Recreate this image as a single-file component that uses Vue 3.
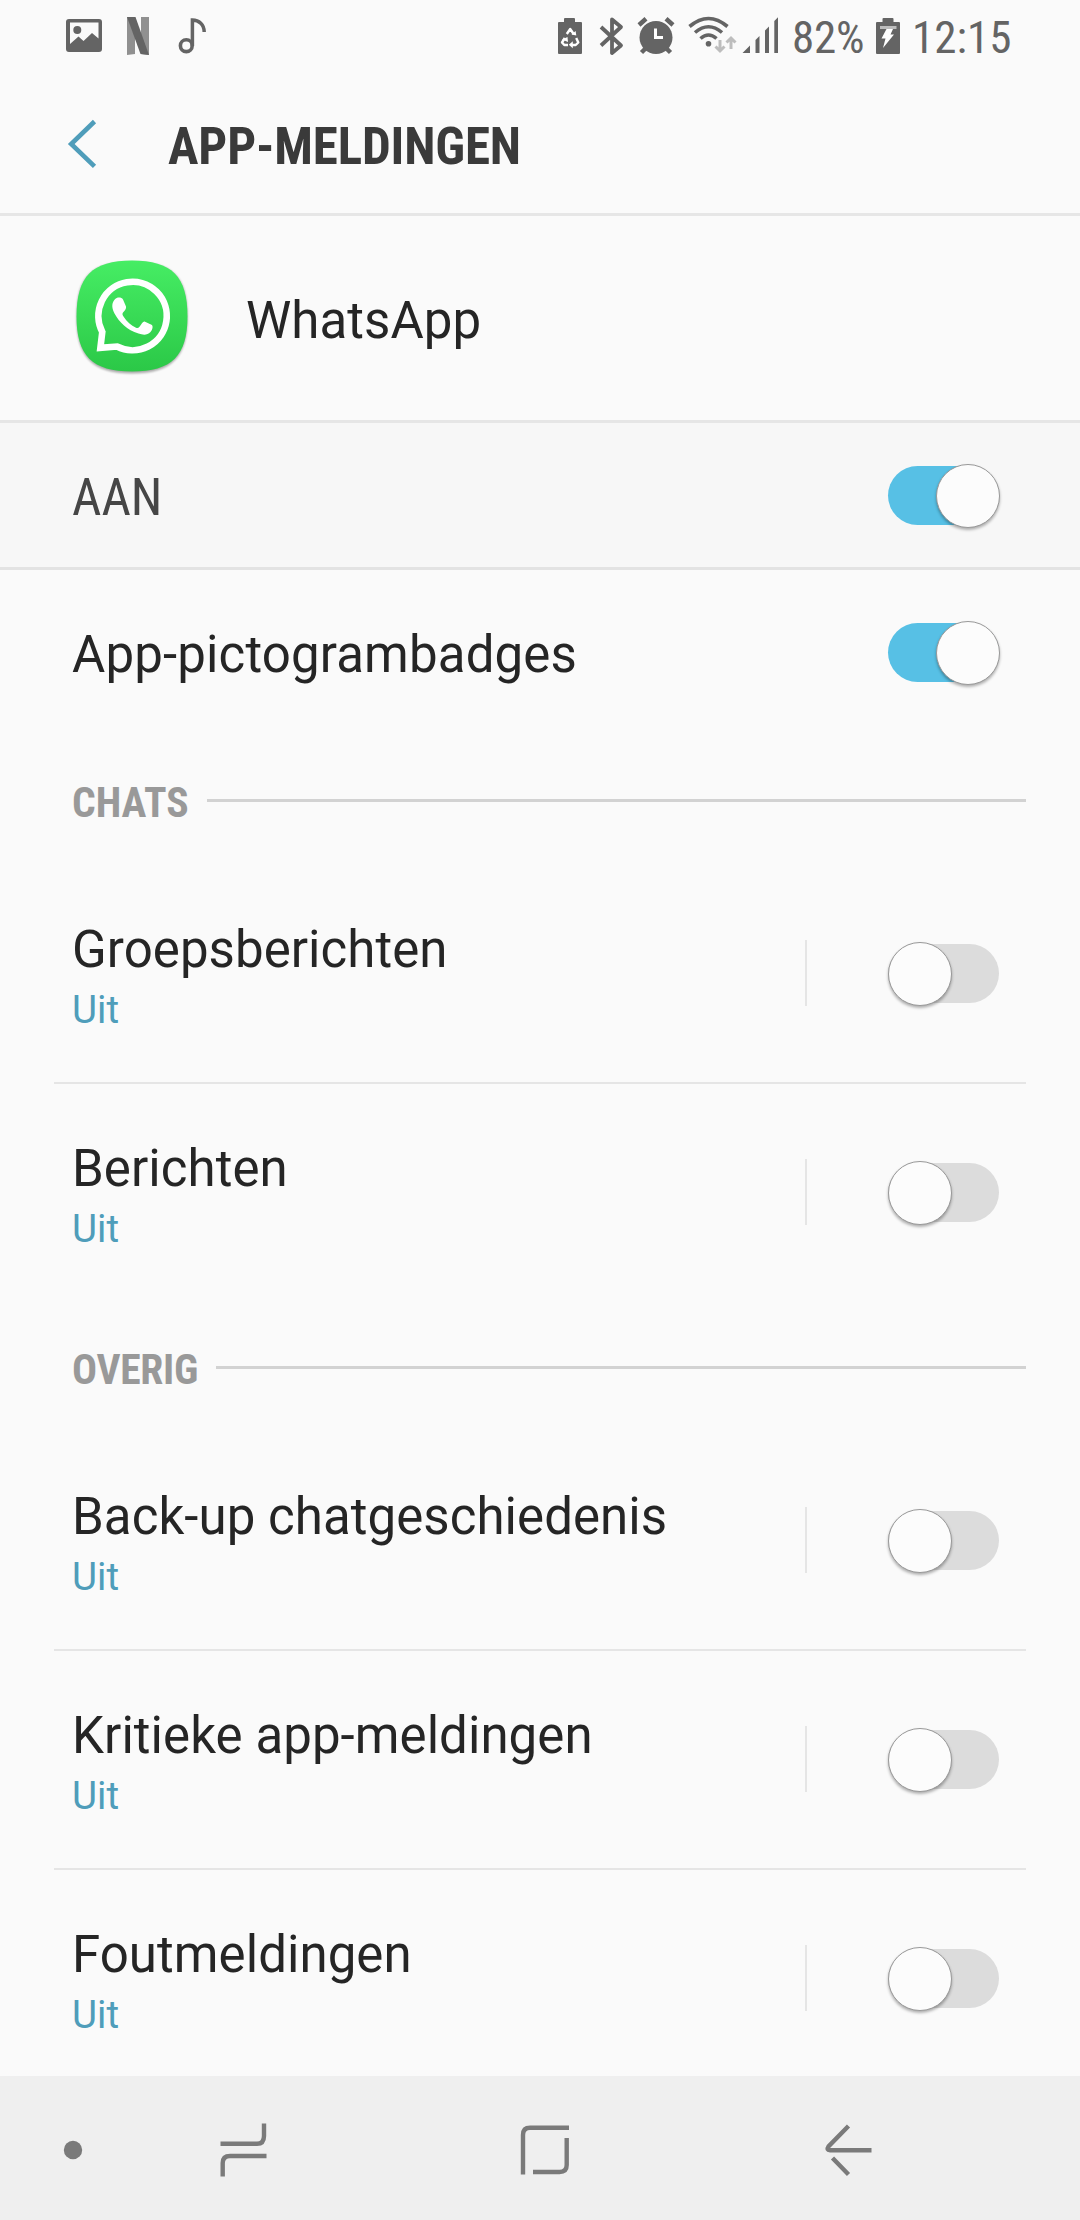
<script setup>
import { ref } from 'vue'

const enabled = ref(true)
const badges = ref(true)
const sections = ref([
  {
    title: 'CHATS',
    rows: [
      { name: 'Groepsberichten', on: false },
      { name: 'Berichten', on: false },
    ],
  },
  {
    title: 'OVERIG',
    rows: [
      { name: 'Back-up chatgeschiedenis', on: false },
      { name: 'Kritieke app-meldingen', on: false },
      { name: 'Foutmeldingen', on: false },
    ],
  },
])
</script>

<template>
  <div class="screen">
    <header class="status">
      <svg class="status-left" width="160" height="75" viewBox="0 0 160 75">
        <path fill="#646464" fill-rule="evenodd" d="M9 19H39Q42 19 42 22V49Q42 52 39 52H9Q6 52 6 49V22Q6 19 9 19ZM10 22.500V44L18.500 36.500L23.500 41L32 33L38.500 38.500V22.500Z" />
        <circle cx="17.300" cy="30" r="4" fill="#646464" />
        <path fill="#909090" d="M67 17H75V54L67 55ZM81 17H89V55L81 54Z" />
        <path fill="#646464" d="M67 17H75.500L89 55L80.500 54Z" />
        <circle cx="126.300" cy="45.700" r="5.900" fill="none" stroke="#646464" stroke-width="3.600" />
        <path fill="none" stroke="#646464" stroke-width="3.500" d="M132.400 46V20C139 20 144.200 24.500 144.200 32" />
      </svg>
      <div class="status-right">
        <svg width="240" height="75" viewBox="0 0 240 75">
          <path fill="#646464" d="M18 22H24V19Q24 18 25 18H34Q35 18 35 19V22H41Q42 22 42 23V53Q42 54 41 54H19Q18 54 18 53V23Q18 22 19 22Z" />
          <path fill="none" stroke="#fff" stroke-width="2.400" stroke-linejoin="round" d="M26.800 34L30.200 29L33.600 34M36.200 38L38.300 42.500L35.700 45H31.500M28 45H24.300L22 42.500L24.800 38" />
          <path fill="#fff" d="M31.500 34.600L36.300 35.500L35.600 31ZM32.800 41.200V48.200L28.800 44.700ZM22 39.500L27.500 37L28 42Z" />
          <path fill="none" stroke="#646464" stroke-width="3.800" stroke-linejoin="round" d="M61 27L81 45.500L72 53V19.500L81 27L61 45.500" />
          <circle cx="116" cy="37.500" r="16.500" fill="#646464" />
          <path fill="none" stroke="#646464" stroke-width="4.500" d="M99 25L106 18.800M133 25L126 18.800M106 48L101.500 52.500M126 48L130.500 52.500" />
          <path fill="none" stroke="#fff" stroke-width="3" d="M115.500 28.500V37.500H123" />
          <g fill="none" stroke="#646464" stroke-width="3.600">
            <path d="M149.500 26.500Q168.500 10.500 187.500 26.500" />
            <path d="M155 32.500Q168.500 21 182 32.500" />
            <path d="M160.500 38.500Q168.500 31.500 176.500 38.500" />
          </g>
          <circle cx="168.500" cy="43.800" r="2.800" fill="#646464" />
          <path fill="none" stroke="#bdbdbd" stroke-width="3" d="M180 40V51M175.500 46.500L180 51L184.500 46.500M191 49V38M186.500 42.500L191 38L195.500 42.500" />
          <path fill="#646464" d="M202.500 53L210 45.500V53ZM215.500 53V40L219.500 36V53ZM225 53V30.500L229 26.500V53ZM234.300 53V21L238 17.300V53Z" />
        </svg>
        <span class="cond percent">82%</span>
        <svg width="24" height="75" viewBox="0 0 24 75">
          <path fill="#646464" d="M0 23Q0 22 1 22H6.500V19Q6.500 18 7.500 18H16.500Q17.500 18 17.500 19V22H23Q24 22 24 23V53Q24 54 23 54H1Q0 54 0 53Z" />
          <path fill="#bdbdbd" d="M4 26H20.500V29H4Z" />
          <path fill="#fff" d="M10.500 29H17L14.500 34.500H18L7 48L9.500 38.500H5.500Z" />
        </svg>
        <span class="cond clock">12:15</span>
      </div>
    </header>

    <div class="titlebar">
      <svg width="30" height="50" viewBox="0 0 30 50">
        <path fill="none" stroke="#4f9dba" stroke-width="4.600" d="M27.500 2.500L4.200 25L27.500 47.300" />
      </svg>
      <h1 class="cond">APP-MELDINGEN</h1>
    </div>

    <div class="app">
      <svg width="116" height="124" viewBox="0 0 116 124">
        <defs>
          <linearGradient id="leaf" x1="0" y1="0" x2="0" y2="1">
            <stop offset="0" stop-color="#46ed64" />
            <stop offset="1" stop-color="#2bc847" />
          </linearGradient>
          <filter id="soft" x="-10%" y="-10%" width="120%" height="120%">
            <feGaussianBlur stdDeviation="1.300" />
          </filter>
        </defs>
        <path fill="#000" opacity=".32" filter="url(#soft)" d="M58 6C99 6 113.500 20 113.500 61.500C113.500 101 98 117.500 58 117.500C18 117.500 2.500 101 2.500 61.500C2.500 20 17 6 58 6Z" />
        <path fill="url(#leaf)" d="M58 4.500C98 4.500 113.500 20.500 113.500 60.500C113.500 99.500 98 115.500 58 115.500C18 115.500 2.500 99.500 2.500 60.500C2.500 20.500 18 4.500 58 4.500Z" />
        <path fill="none" stroke="#fff" stroke-width="6.600" d="M28.300 76A34.200 34.200 0 1 1 43 90.500L26.400 91.900Z" />
        <path fill="#fff" d="M41.500 42.800C43.500 41 47.500 41 49 43.500L52 50.500C52.500 52.500 51 54.500 49 56.500C48 58 48.500 59 49.500 60.500C53 66 57 69.500 62 71.800C63.500 72.500 64.500 72 65.500 70.800C68 67.500 69 65 71 65.700L77.500 68.800C79.500 70 78.500 74 76.500 76C73 79.500 69 79 64.500 77.500C53 74 45.500 66.500 40.500 57.500C37 51 38 46 41.500 42.800Z" />
      </svg>
      <span class="label">WhatsApp</span>
    </div>

    <div class="master">
      <span class="cond">AAN</span>
      <button class="switch" :class="{ on: enabled }" @click="enabled = !enabled"><i /></button>
    </div>

    <div class="badges">
      <span class="label">App-pictogrambadges</span>
      <button class="switch" :class="{ on: badges }" @click="badges = !badges"><i /></button>
    </div>

    <main>
      <section v-for="s in sections" :key="s.title">
        <div class="group"><h2 class="cond">{{ s.title }}</h2><hr /></div>
        <div v-for="r in s.rows" :key="r.name" class="row">
          <div class="text">
            <span class="label">{{ r.name }}</span>
            <span class="state">{{ r.on ? 'Aan' : 'Uit' }}</span>
          </div>
          <div class="divider" />
          <button class="switch" :class="{ on: r.on }" @click="r.on = !r.on"><i /></button>
        </div>
      </section>
    </main>

    <nav class="navbar">
      <svg width="1080" height="144" viewBox="0 0 1080 144">
        <circle cx="73" cy="74" r="9.200" fill="#7a7a7a" />
        <g fill="none" stroke="#7a7a7a" stroke-width="4.400">
          <path d="M220.500 67.800H257Q264 67.800 264 60V47.500M266.500 80H230Q222.700 80 222.700 87V100.500" />
          <path d="M523 98.500V59Q523 51.800 530 51.800H569M566.700 62V89Q566.700 96 559.500 96H533" />
          <path d="M848.500 50L828.500 70.500Q826 74.200 830 74.200H871.500M832.500 82L848.500 98.500" />
        </g>
      </svg>
    </nav>
  </div>
</template>

<style>
body { background: #fafafa; }
</style>

<style scoped>
.screen {
  width: 1080px;
  height: 2220px;
  overflow: hidden;
  display: flex;
  flex-direction: column;
  background: #fafafa;
  font-family: Roboto, sans-serif;
  color: #252525;
}
.screen > * { flex-shrink: 0; box-sizing: border-box; }
svg { display: block; flex: none; }
.cond { font-family: "Roboto Condensed", Roboto, sans-serif; font-stretch: 75%; white-space: nowrap; }
h1, h2, hr { margin: 0; border: 0; }

.status { height: 75px; display: flex; justify-content: space-between; padding: 0 69px 0 60px; color: #646464; }
.status-right { display: flex; font-size: 45px; line-height: 75px; }
.percent { width: 84px; margin-left: 12px; letter-spacing: -.2px; }
.clock { width: 99px; margin-left: 12px; }

.titlebar { height: 141px; display: flex; align-items: center; padding: 0 0 0 67px; border-bottom: 3px solid #e6e6e6; }
.titlebar h1 { margin-left: 71px; padding-top: 6px; font-size: 51px; font-weight: 700; letter-spacing: -.15px; color: #3a3a3a; line-height: 70px; }

.app { height: 207px; display: flex; padding: 40px 0 0 74px; border-bottom: 3px solid #e6e6e6; }
.label { font-size: 51px; line-height: 64px; letter-spacing: .06px; white-space: nowrap; }
.app .label { margin: 33px 0 0 56px; }

.master { height: 147px; display: flex; align-items: center; justify-content: space-between; padding: 2px 80px 0 72px; background: #f7f7f7; border-bottom: 3px solid #e3e3e3; font-size: 51px; line-height: 64px; color: #464646; }
.master span { padding-top: 3px; }
.badges { height: 166px; display: flex; align-items: center; justify-content: space-between; padding: 0 80px 0 72px; }
.badges .label { padding-top: 4px; letter-spacing: .15px; }

.switch { position: relative; width: 112px; height: 64px; padding: 0; border: 0; background: none; display: flex; align-items: flex-start; }
.switch::before { content: ""; width: 111px; height: 59px; margin-top: 2px; border-radius: 30px; background: #dcdcdc; }
.switch.on::before { background: #57c0e5; }
.switch i { position: absolute; left: 0; top: 0; width: 64px; height: 64px; box-sizing: border-box; border: 1px solid #999; border-radius: 50%; background: #fcfcfc; box-shadow: 0 2px 3px rgba(0, 0, 0, .3); }
.switch.on i { left: 48px; }

main { height: 1340px; overflow: hidden; }
.group { height: 129px; display: flex; padding: 0 54px 0 72px; }
.group h2 { margin-top: 37px; font-size: 41.6px; line-height: 60px; color: #999; font-weight: 700; }
.group hr { flex: 1; height: 3px; margin: 63px 0 0 18px; background: #d2d2d2; }
section:last-child .group h2 { letter-spacing: -.25px; }

.row { height: 219px; box-sizing: border-box; margin: 0 54px; padding: 0 26px 0 18px; display: flex; border-bottom: 2px solid #e5e5e5; }
.row:last-child { border-bottom-color: transparent; }
.text { flex: 1; display: flex; flex-direction: column; padding-top: 53px; }
.state { font-size: 38.6px; line-height: 48px; color: #4f9dba; margin-top: 4px; }
.divider { width: 2px; height: 66px; margin: 75px 81px 0 0; background: #e5e5e5; }
.row .switch { margin-top: 77px; }

.navbar { height: 144px; background: #efefef; }
</style>
